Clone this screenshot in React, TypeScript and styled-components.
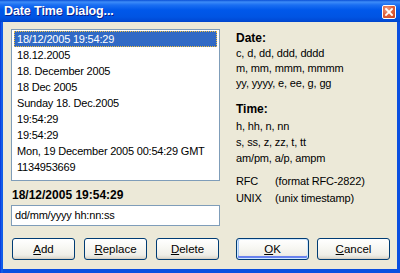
import React from "react";
import styled, { createGlobalStyle } from "styled-components";

const Global = createGlobalStyle`
  html, body { margin: 0; padding: 0; background: #ffffff; }
  body { font-family: "Liberation Sans", Arial, sans-serif; font-size: 11px; color: #000; }
  * { box-sizing: border-box; }
`;

const Window = styled.div`
  width: 400px;
  height: 273px;
  display: flex;
  flex-direction: column;
  background: #0831d9;
  overflow: hidden;
`;

const TitleBar = styled.div`
  height: 22px;
  flex: none;
  display: flex;
  align-items: center;
  justify-content: space-between;
  padding: 0 4px 0 4px;
  background: linear-gradient(
    180deg,
    #0a4fd6 0px,
    #3d8cf8 2px,
    #1a6ef2 5px,
    #0058ea 10px,
    #0054e3 17px,
    #0049d4 21px,
    #0044c9 22px
  );
`;

const Title = styled.span`
  color: #ffffff;
  font-family: "Liberation Sans", Arial, sans-serif;
  font-weight: bold;
  font-size: 12.5px;
  letter-spacing: -0.1px;
  text-shadow: 1px 1px 0 #0a1f8a;
`;

const CloseButton = styled.div`
  width: 14px;
  height: 14px;
  margin-top: 1px;
  border: 1px solid #ffffff;
  border-radius: 2px;
  background: radial-gradient(circle at 35% 30%, #f0a48a 0%, #e0643f 45%, #c8411c 100%);
  display: flex;
  align-items: center;
  justify-content: center;
`;

const Frame = styled.div`
  flex: 1;
  display: flex;
  padding: 0 4px 4px 3px;
  background: linear-gradient(90deg, #0831d9 0, #166aee 2px, #0a4fe0 3px);
`;

const Client = styled.div`
  flex: 1;
  background: #ece9d8;
  display: grid;
  grid-template-columns: 209px 1fr;
  grid-template-rows: 1fr 22px;
  column-gap: 15px;
  row-gap: 12px;
  padding: 7px 7px 9px 8px;
`;

const LeftCol = styled.div`
  display: flex;
  flex-direction: column;
`;

const ListBox = styled.div`
  height: 152px;
  background: #ffffff;
  border: 1px solid #7f9db9;
  padding: 1px 2px;
`;

const ListItem = styled.div<{ $selected?: boolean }>`
  height: 16px;
  line-height: 16px;
  padding-left: 3px;
  white-space: nowrap;
  font-size: 11px;
  letter-spacing: -0.2px;
  color: ${(p) => (p.$selected ? "#ffffff" : "#000000")};
  background: ${(p) => (p.$selected ? "#316ac5" : "transparent")};
  outline: ${(p) => (p.$selected ? "1px dotted #f0c040" : "none")};
  outline-offset: -1px;
`;

const ValueLabel = styled.div`
  margin-top: 7px;
  font-size: 12px;
  font-weight: bold;
  line-height: 14px;
  padding-left: 1px;
`;

const TextInput = styled.div`
  margin-top: 3px;
  height: 21px;
  border: 1px solid #7f9db9;
  background: #ffffff;
  padding-left: 3px;
  line-height: 19px;
  font-size: 11px;
  letter-spacing: -0.2px;
`;

const RightCol = styled.div`
  display: flex;
  flex-direction: column;
  padding-left: 1px;
  padding-top: 2px;
`;

const Heading = styled.div<{ $gap?: number }>`
  font-weight: bold;
  font-size: 12px;
  line-height: 15px;
  margin-top: ${(p) => p.$gap ?? 0}px;
`;

const Line = styled.div<{ $h?: number; $gap?: number }>`
  font-size: 11px;
  letter-spacing: -0.15px;
  line-height: ${(p) => p.$h ?? 15}px;
  margin-top: ${(p) => p.$gap ?? 0}px;
  white-space: nowrap;
`;

const KeyRow = styled.div<{ $gap?: number }>`
  display: grid;
  grid-template-columns: 39px 1fr;
  font-size: 11px;
  letter-spacing: -0.15px;
  line-height: 17px;
  margin-top: ${(p) => p.$gap ?? 0}px;
`;

const ButtonRow = styled.div<{ $gap: number }>`
  display: flex;
  gap: ${(p) => p.$gap}px;
  padding-left: ${(p) => (p.$gap > 9 ? 0 : 1)}px;
`;

const Button = styled.div<{ $w: number; $default?: boolean }>`
  width: ${(p) => p.$w}px;
  height: 22px;
  border: 1px solid #003c74;
  border-radius: 3px;
  background: linear-gradient(180deg, #ffffff 0%, #f8f8f4 40%, #efeee8 80%, #d8d5c9 100%);
  box-shadow: ${(p) =>
    p.$default
      ? "inset 0 0 0 1px #cee7ff, inset 0 -2px 0 1px #6982ee, inset 1px 0 0 1px #a9c8f5"
      : "inset 0 -1px 0 #d6d0c5"};
  display: flex;
  align-items: center;
  justify-content: center;
  font-size: 11.5px;
  line-height: 20px;
  color: #000;
  u { text-decoration: underline; text-underline-offset: 1px; }
`;

const items = [
  "18/12/2005 19:54:29",
  "18.12.2005",
  "18. December 2005",
  "18 Dec 2005",
  "Sunday 18. Dec.2005",
  "19:54:29",
  "19:54:29",
  "Mon, 19 December 2005 00:54:29 GMT",
  "1134953669",
];

export default function App() {
  return (
    <>
      <Global />
      <Window>
        <TitleBar>
          <Title>Date Time Dialog...</Title>
          <CloseButton>
            <svg width="8" height="8" viewBox="0 0 8 8">
              <path d="M1 1 L7 7 M7 1 L1 7" stroke="#ffffff" strokeWidth="1.8" strokeLinecap="square" />
            </svg>
          </CloseButton>
        </TitleBar>
        <Frame>
          <Client>
            <LeftCol>
              <ListBox>
                {items.map((t, i) => (
                  <ListItem key={i} $selected={i === 0}>
                    {t}
                  </ListItem>
                ))}
              </ListBox>
              <ValueLabel>18/12/2005 19:54:29</ValueLabel>
              <TextInput>dd/mm/yyyy hh:nn:ss</TextInput>
            </LeftCol>
            <RightCol>
              <Heading>Date:</Heading>
              <Line>c, d, dd, ddd, dddd</Line>
              <Line>m, mm, mmm, mmmm</Line>
              <Line>yy, yyyy, e, ee, g, gg</Line>
              <Heading $gap={11}>Time:</Heading>
              <Line $h={16} $gap={1}>h, hh, n, nn</Line>
              <Line $h={16}>s, ss, z, zz, t, tt</Line>
              <Line $h={16}>am/pm, a/p, ampm</Line>
              <KeyRow $gap={7}>
                <span>RFC</span>
                <span>(format RFC-2822)</span>
              </KeyRow>
              <KeyRow>
                <span>UNIX</span>
                <span>(unix timestamp)</span>
              </KeyRow>
            </RightCol>
            <ButtonRow $gap={9}>
              <Button $w={63}>
                <span><u>A</u>dd</span>
              </Button>
              <Button $w={63}>
                <span><u>R</u>eplace</span>
              </Button>
              <Button $w={63}>
                <span><u>D</u>elete</span>
              </Button>
            </ButtonRow>
            <ButtonRow $gap={8}>
              <Button $w={73} $default>
                <span><u>O</u>K</span>
              </Button>
              <Button $w={73}>
                <span><u>C</u>ancel</span>
              </Button>
            </ButtonRow>
          </Client>
        </Frame>
      </Window>
    </>
  );
}
